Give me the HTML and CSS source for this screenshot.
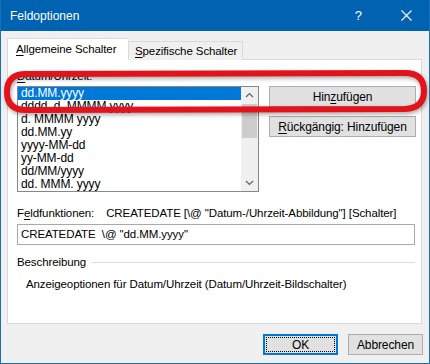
FILE: index.html
```html
<!DOCTYPE html>
<html lang="de">
  <head>
    <meta charset="UTF-8" />
    <meta name="viewport" content="width=device-width, initial-scale=1.0" />
    <title>Feldoptionen</title>
    <link rel="stylesheet" href="styles.css">
  </head>
  <body>
    <div class="window">
      <div class="titlebar">
        <span class="title">Feldoptionen</span>
        <span class="help">?</span>
        <svg class="close" width="11" height="11" viewBox="0 0 11 11">
          <path d="M0.5 0.5 L10.5 10.5 M10.5 0.5 L0.5 10.5" stroke="#fff" stroke-width="1.1" fill="none" />
        </svg>
      </div>

      <div class="tabs">
        <div class="tab active"><u>A</u>llgemeine Schalter</div>
        <div class="tab"><u>S</u>pezifische Schalter</div>
      </div>

      <div class="panel">
        <div class="label"><u>D</u>atum/Uhrzeit:</div>
        <div class="row">
          <div class="listbox">
            <ul class="items">
              <li class="selected">dd.MM.yyyy</li>
              <li>dddd, d. MMMM yyyy</li>
              <li>d. MMMM yyyy</li>
              <li>dd.MM.yy</li>
              <li>yyyy-MM-dd</li>
              <li>yy-MM-dd</li>
              <li>dd/MM/yyyy</li>
              <li>dd. MMM. yyyy</li>
            </ul>
            <div class="scrollbar">
              <svg class="arrow" width="17" height="17" viewBox="0 0 17 17">
                <path d="M5 10 L8.5 6.5 L12 10" stroke="#606060" stroke-width="1.2" fill="none" />
              </svg>
              <div class="track"><div class="thumb"></div></div>
              <svg class="arrow" width="17" height="17" viewBox="0 0 17 17">
                <path d="M5 7 L8.5 10.5 L12 7" stroke="#606060" stroke-width="1.2" fill="none" />
              </svg>
            </div>
          </div>
          <div class="side">
            <button class="btn wide">Hin<u>z</u>ufügen</button>
            <button class="btn wide"><u>R</u>ückgängig: Hinzufügen</button>
          </div>
        </div>

        <div class="codes">
          <span>F<u>e</u>ldfunktionen:</span>
          <span class="syntax">CREATEDATE [\@ "Datum-/Uhrzeit-Abbildung"] [Schalter]</span>
        </div>
        <div class="field">CREATEDATE  \@ "dd.MM.yyyy"</div>

        <div class="group">
          <span>Beschreibung</span>
          <span class="rule"></span>
        </div>
        <div class="desc">Anzeigeoptionen für Datum/Uhrzeit (Datum/Uhrzeit-Bildschalter)</div>
      </div>

      <div class="footer">
        <button class="btn default"><span class="focus">OK</span></button>
        <button class="btn">Abbrechen</button>
      </div>

      <svg class="marker" width="430" height="364" viewBox="0 0 430 364">
        <path d="M26 74 L405 73 Q424 73 424 91 Q424 108 405 109 L26 110 Q7 110 7 92 Q7 74 26 74 Z"
          stroke="#e3131b" stroke-width="6" fill="none" />
      </svg>
    </div>
  </body>
</html>
```

FILE: styles.css
```css
body {
  margin: 0;
  font-family: "Liberation Sans", Arial, sans-serif;
  font-size: 11.5px;
  letter-spacing: -0.1px;
  color: #000;
  background-color: #f0f0f0;
}

u {
  text-decoration: underline;
  text-underline-offset: 2px;
}

.window {
  position: relative;
  width: 430px;
  height: 364px;
  box-sizing: border-box;
  border: 1px solid #1a6fb8;
  border-top: none;
  background-color: #f0f0f0;
  overflow: hidden;
}

.titlebar {
  height: 31px;
  margin: 0 -1px;
  background-color: #0063b1;
  color: #fff;
  display: flex;
  align-items: center;
  padding-left: 10px;
}

.title {
  flex-grow: 1;
  font-size: 12px;
  letter-spacing: 0;
}

.help {
  font-size: 13px;
  margin-right: 39px;
}

.close {
  margin-right: 18px;
}

.tabs {
  display: flex;
  align-items: flex-end;
  padding: 7px 0 0 6px;
  height: 22px;
  position: relative;
  z-index: 1;
}

.tab {
  height: 19px;
  line-height: 18px;
  width: 115px;
  padding-left: 6px;
  border: 1px solid #d9d9d9;
  border-bottom: none;
  background-color: #f0f0f0;
  box-sizing: border-box;
  white-space: nowrap;
}

.tab.active {
  height: 22px;
  line-height: 20px;
  width: 121px;
  padding-left: 8px;
  background-color: #fff;
  border-right: none;
}

.panel {
  margin: -1px 0 0 6px;
  width: 415px;
  height: 265px;
  box-sizing: border-box;
  border: 1px solid #d9d9d9;
  background-color: #fff;
  padding: 9px 0 0 9px;
}

.label {
  line-height: 15px;
}

.row {
  display: flex;
  gap: 10px;
  margin-top: 2px;
}

.listbox {
  display: flex;
  width: 242px;
  height: 106px;
  box-sizing: border-box;
  border: 1px solid #828790;
  overflow: hidden;
}

.items {
  list-style: none;
  margin: 0;
  padding: 0;
  flex-grow: 1;
  font-size: 12px;
}

.items li {
  height: 13px;
  line-height: 13px;
  padding-left: 3px;
  white-space: nowrap;
}

.items li.selected {
  background-color: #0078d7;
  color: #fff;
}

.scrollbar {
  width: 17px;
  display: flex;
  flex-direction: column;
  background-color: #f0f0f0;
}

.arrow {
  display: block;
  flex-shrink: 0;
}

.track {
  flex-grow: 1;
}

.thumb {
  height: 34px;
  background-color: #cdcdcd;
  margin: 0 1px;
}

.side {
  display: flex;
  flex-direction: column;
  gap: 9px;
}

.btn {
  font-family: inherit;
  font-size: 12px;
  letter-spacing: inherit;
  color: #000;
  background-color: #e1e1e1;
  border: 1px solid #adadad;
  padding: 0;
  height: 21px;
  width: 75px;
}

.btn.wide {
  width: 147px;
}

.codes {
  margin-top: 14px;
  line-height: 15px;
  display: flex;
}

.syntax {
  margin-left: 12px;
}

.field {
  margin-top: 3px;
  width: 398px;
  height: 21px;
  box-sizing: border-box;
  border: 1px solid #a9a9a9;
  line-height: 19px;
  padding-left: 3px;
  white-space: pre;
}

.group {
  margin-top: 10px;
  display: flex;
  align-items: center;
  gap: 6px;
  width: 398px;
  line-height: 15px;
}

.rule {
  flex-grow: 1;
  height: 1px;
  background-color: #dcdcdc;
}

.desc {
  margin: 7px 0 0 9px;
  line-height: 15px;
}

.footer {
  display: flex;
  justify-content: flex-end;
  gap: 10px;
  padding: 10px 6px 0 0;
}

.btn.default {
  border: 2px solid #0078d7;
  padding: 1px;
}

.focus {
  display: block;
  height: 100%;
  box-sizing: border-box;
  border: 1px dotted #000;
  line-height: 15px;
}

.marker {
  position: absolute;
  top: 0;
  left: -1px;
  pointer-events: none;
  filter: drop-shadow(1px 2px 2px rgba(0, 0, 0, 0.35));
}
```
